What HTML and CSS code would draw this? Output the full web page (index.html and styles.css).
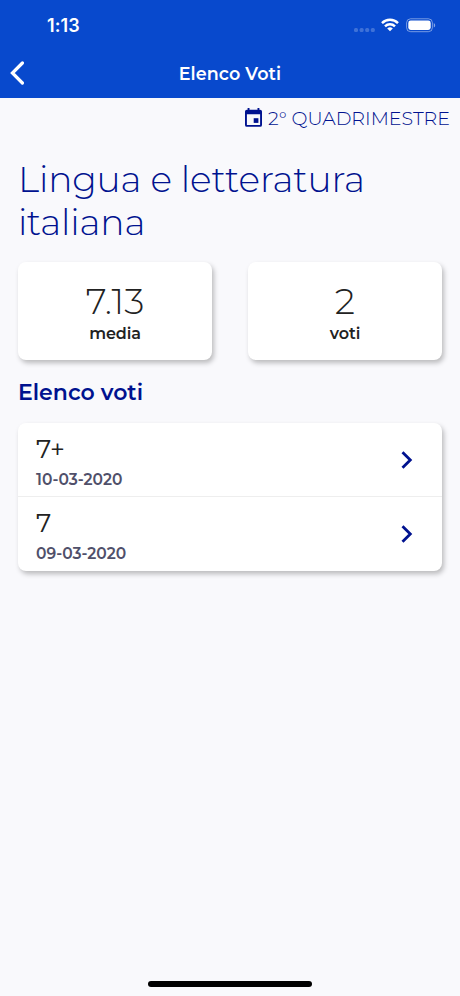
FILE: index.html
```html
<!DOCTYPE html>
<html lang="it">
<head>
    <meta charset="UTF-8">
    <meta name="viewport" content="width=device-width, initial-scale=1.0">
    <title>Elenco Voti</title>
    <link rel="stylesheet" href="styles.css">
</head>
<body>
    <header class="header">
        <div class="status-bar">
            <div class="time">1:13</div>
            <div class="status-icons">
                <svg width="21" height="4" viewBox="0 0 21 4" fill="#fff" opacity="0.22">
                    <rect x="0" y="0" width="4" height="4" rx="1.5"/>
                    <rect x="5.6" y="0" width="4" height="4" rx="1.5"/>
                    <rect x="11.2" y="0" width="4" height="4" rx="1.5"/>
                    <rect x="16.8" y="0" width="4" height="4" rx="1.5"/>
                </svg>
                <svg class="wifi" width="18" height="14" viewBox="0 0 18 14" fill="none" stroke="#fff" stroke-width="2.5">
                    <path d="M1 5.1a11.4 11.4 0 0 1 16 0"/>
                    <path d="M4 8.3a7.2 7.2 0 0 1 10 0"/>
                    <path d="M9 13.2L6.2 10.5a4 4 0 0 1 5.6 0z" fill="#fff" stroke="none"/>
                </svg>
                <svg class="battery" width="30" height="15" viewBox="0 0 30 15">
                    <rect x="0.6" y="0.8" width="25.8" height="12.9" rx="4" fill="none" stroke="#fff" stroke-opacity="0.45"/>
                    <rect x="2.3" y="2.5" width="22.4" height="9.5" rx="2.4" fill="#fff"/>
                    <path d="M27.8 5v4.6c1.9-.8 1.9-3.8 0-4.6z" fill="#fff" fill-opacity="0.5"/>
                </svg>
            </div>
        </div>
        <div class="nav-bar">
            <svg class="back" width="14" height="24" viewBox="0 0 14 24" fill="none" stroke="#fff" stroke-width="3.2" stroke-linecap="round">
                <path d="M12.4 2L2.4 12l10 10"/>
            </svg>
            <div class="nav-title">Elenco Voti</div>
        </div>
    </header>

    <div class="period">
        <svg width="17" height="19" viewBox="0 0 17 19" fill="#00128f">
            <path fill-rule="evenodd" d="M2.6 0h1.9v1.7h8V0h1.9v1.7h.7A1.9 1.9 0 0 1 17 3.6v13.3a1.9 1.9 0 0 1-1.9 1.9H1.9A1.9 1.9 0 0 1 0 16.9V3.6a1.9 1.9 0 0 1 1.9-1.9h.7zM1.9 6.3v10.6h13.2V6.3z"/>
            <rect x="8.7" y="10.2" width="4.7" height="4.7"/>
        </svg>
        <span class="period-name">2° QUADRIMESTRE</span>
    </div>

    <main class="content">
        <h1 class="subject">Lingua e letteratura italiana</h1>

        <div class="stats">
            <div class="card stat">
                <div class="stat-value">7.13</div>
                <div class="stat-label">media</div>
            </div>
            <div class="card stat">
                <div class="stat-value">2</div>
                <div class="stat-label">voti</div>
            </div>
        </div>

        <h2 class="section-title">Elenco voti</h2>

        <div class="card grades">
            <div class="grade">
                <div>
                    <div class="grade-value">7+</div>
                    <div class="grade-date">10-03-2020</div>
                </div>
                <svg width="12" height="18" viewBox="0 0 12 18" fill="none" stroke="#00128f" stroke-width="2.8">
                    <path d="M1.5 1.2L9.3 9l-7.8 7.8"/>
                </svg>
            </div>
            <div class="grade">
                <div>
                    <div class="grade-value">7</div>
                    <div class="grade-date">09-03-2020</div>
                </div>
                <svg width="12" height="18" viewBox="0 0 12 18" fill="none" stroke="#00128f" stroke-width="2.8">
                    <path d="M1.5 1.2L9.3 9l-7.8 7.8"/>
                </svg>
            </div>
        </div>
    </main>

    <div class="home-indicator"></div>
</body>
</html>
```

FILE: styles.css
```css
* {
    box-sizing: border-box;
}

body {
    display: flex;
    flex-direction: column;
    height: 996px;
    margin: 0;
    font-family: Montserrat, Inter, sans-serif;
    background-color: #f9f9fc;
    color: #222;
}

svg {
    display: block;
    flex-shrink: 0;
}

.header {
    height: 98px;
    background-color: #0849cd;
    color: #fff;
}

.status-bar {
    display: flex;
    justify-content: space-between;
    height: 49px;
    padding: 15px 24px 0 47px;
}

.time {
    font-family: Inter, sans-serif;
    font-size: 18px;
    font-weight: 600;
    line-height: 22px;
    letter-spacing: 0.1px;
}

.status-icons {
    display: flex;
    align-items: flex-start;
    padding-top: 3px;
}

.status-icons svg:first-child {
    margin-top: 10px;
}

.wifi {
    margin-left: 6px;
}

.battery {
    margin-left: 7px;
}

.nav-bar {
    display: grid;
    grid-template-columns: 14px 1fr 14px;
    align-items: center;
    height: 48px;
    padding: 0 10px;
}

.nav-title {
    text-align: center;
    font-size: 17.5px;
    font-weight: 600;
    letter-spacing: 0.1px;
}

.period {
    display: flex;
    align-items: center;
    justify-content: flex-end;
    gap: 6px;
    height: 41px;
    padding: 0 10px 2px 0;
    color: #00128f;
}

.period-name {
    padding-top: 2px;
    font-size: 19px;
    font-weight: 300;
    line-height: 24px;
}

.content {
    flex: 1;
    padding: 19px 18px 0;
}

.subject {
    margin: 0 0 18px;
    color: #00128f;
    font-size: 36px;
    font-weight: 300;
    line-height: 43px;
    letter-spacing: -0.16px;
}

.card {
    background-color: #fff;
    border-radius: 8px;
    box-shadow: 2px 3px 5px rgba(0, 0, 0, 0.25);
}

.stats {
    display: grid;
    grid-template-columns: 1fr 1fr;
    gap: 36px;
}

.stat {
    height: 98px;
    padding-top: 18px;
    text-align: center;
}

.stat-value {
    font-size: 36px;
    font-weight: 300;
    line-height: 42px;
}

.stat-label {
    padding-top: 1px;
    font-size: 16px;
    font-weight: 600;
    line-height: 22px;
    letter-spacing: -0.1px;
}

.section-title {
    margin: 19px 0 16px;
    color: #00128f;
    font-size: 22px;
    font-weight: 600;
    line-height: 28px;
}

.grades {
    height: 148px;
}

.grade {
    display: flex;
    align-items: center;
    justify-content: space-between;
    height: 74px;
    padding: 0 29px 0 18px;
}

.grade + .grade {
    box-shadow: 0 -1px #eee;
}

.grade-value {
    padding-top: 4px;
    font-size: 26px;
    font-weight: 400;
    line-height: 34px;
}

.grade-date {
    padding-top: 1px;
    color: #50506a;
    font-size: 15.5px;
    font-weight: 600;
    line-height: 26px;
}

.home-indicator {
    width: 164px;
    height: 6px;
    margin: 0 auto 9px;
    border-radius: 3px;
    background-color: #000;
}
```
